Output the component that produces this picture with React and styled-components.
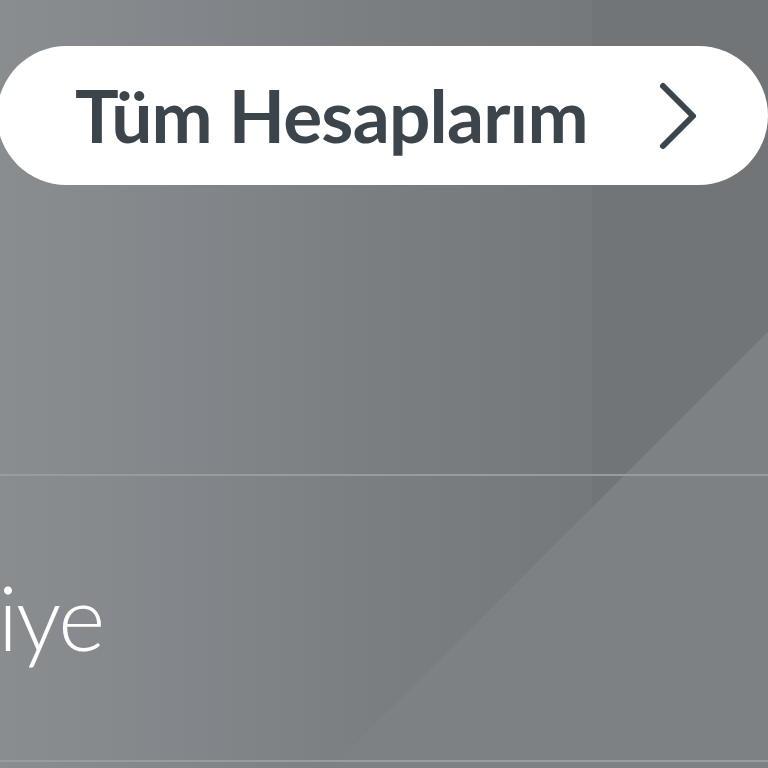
import React from 'react';
import styled, { createGlobalStyle } from 'styled-components';

const GlobalStyle = createGlobalStyle`
  html, body {
    margin: 0;
    padding: 0;
    background: #7b7f82;
  }
`;

const Screen = styled.div`
  width: 768px;
  height: 768px;
  overflow: hidden;
  display: flex;
  flex-direction: column;
  font-family: Lato, 'Open Sans', 'Liberation Sans', sans-serif;
  background-color: #7b7f82;
  background-image:
    linear-gradient(135deg, transparent 71.6%, #7d8184 71.6%),
    linear-gradient(#717578, #717578),
    linear-gradient(90deg, #8a8d90 0%, #82868a 25%, #7a7e81 50%, #76797c 75%, #75787b 100%);
  background-size: 100% 100%, 176px 505px, 100% 100%;
  background-position: 0 0, right top, 0 0;
  background-repeat: no-repeat;
`;

const Pill = styled.button`
  display: flex;
  align-items: center;
  justify-content: space-between;
  margin: 46px 0 0 -3px;
  width: 771px;
  height: 139px;
  padding: 0 70px 0 78px;
  border: none;
  border-radius: 70px;
  background: #ffffff;
  cursor: pointer;
  font-family: inherit;
  flex-shrink: 0;
`;

const PillLabel = styled.span`
  font-size: 73px;
  font-weight: 700;
  letter-spacing: -0.8px;
  color: #3c454c;
  line-height: 1;
  white-space: nowrap;
`;

const Divider = styled.div`
  height: 2px;
  margin-top: ${p => p.$gap}px;
  background: #999c9f;
  flex-shrink: 0;
`;

const Row = styled.div`
  display: flex;
  align-items: flex-start;
  height: 284px;
  flex-shrink: 0;
`;

const RowText = styled.span`
  font-size: 90px;
  font-weight: 300;
  letter-spacing: -2px;
  color: #ffffff;
  line-height: 1;
  margin: 95px 0 0 -2px;
  white-space: nowrap;
`;

const Chevron = () => (
  <svg width="40" height="70" viewBox="0 0 40 70" fill="none">
    <path d="M5 5 L35 35 L5 65" stroke="#3c454c" strokeWidth="6" strokeLinecap="round" strokeLinejoin="round" />
  </svg>
);

export default function App() {
  return (
    <>
      <GlobalStyle />
      <Screen>
        <Pill>
          <PillLabel>Tüm Hesaplarım</PillLabel>
          <Chevron />
        </Pill>
        <Divider $gap={289} />
        <Row>
          <RowText>iye</RowText>
        </Row>
        <Divider $gap={0} />
      </Screen>
    </>
  );
}
